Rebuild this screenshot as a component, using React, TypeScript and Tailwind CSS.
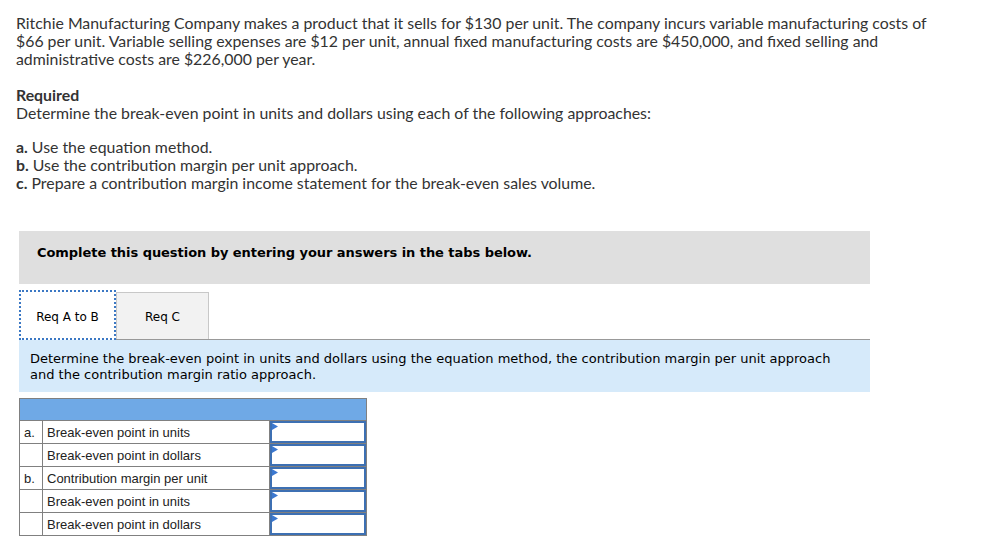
import React from "react";

const rows = [
  { k: "a.", label: "Break-even point in units" },
  { k: "", label: "Break-even point in dollars" },
  { k: "b.", label: "Contribution margin per unit" },
  { k: "", label: "Break-even point in units" },
  { k: "", label: "Break-even point in dollars" },
];

export default function App() {
  return (
    <div className="w-[994px] h-[545px] bg-white overflow-hidden">
      <div className="pl-4 pt-[14px] text-[15.85px] leading-[18px] text-[#333]" style={{ fontFamily: "Lato, 'Open Sans', sans-serif" }}>
        <p className="w-[940px]">
          Ritchie Manufacturing Company makes a product that it sells for $130 per unit. The company incurs variable manufacturing costs of $66 per unit. Variable selling expenses are $12 per unit, annual fixed manufacturing costs are $450,000, and fixed selling and administrative costs are $226,000 per year.
        </p>
        <p className="mt-[18px] font-bold">Required</p>
        <p>Determine the break-even point in units and dollars using each of the following approaches:</p>
        <div className="mt-[16px]">
          <p><b>a.</b> Use the equation method.</p>
          <p><b>b.</b> Use the contribution margin per unit approach.</p>
          <p><b>c.</b> Prepare a contribution margin income statement for the break-even sales volume.</p>
        </div>
      </div>

      <div className="ml-[19px] mt-[39px] w-[851px]" style={{ fontFamily: "'DejaVu Sans', Verdana, sans-serif" }}>
        <div className="h-[53px] bg-[#dfdfdf] pl-[18px] pt-[14px] text-[13px] leading-[16px] font-bold text-black tracking-[-0.05px]">
          Complete this question by entering your answers in the tabs below.
        </div>
        <div className="mt-[6px] flex items-end h-[49px]">
          <div className="w-[97px] h-[50px] bg-white border-2 border-dotted border-[#3b78c4] flex items-center justify-center pt-[3px] text-[12px] text-black relative z-10 mb-[-1px]">
            Req A to B
          </div>
          <div className="w-[93px] h-[47px] bg-[#f2f2f2] border border-[#c8c8c8] border-b-0 flex items-center justify-center pt-[1px] text-[12px] text-black">
            Req C
          </div>
        </div>
        <div className="border-t border-[#999] bg-[#d6eafa] h-[53px] pl-[11px] pt-[11px] text-[13px] leading-[16px] text-black">
          Determine the break-even point in units and dollars using the equation method, the contribution margin per unit approach
          <br />
          and the contribution margin ratio approach.
        </div>
      </div>

      <table className="ml-[19px] mt-[6px] border-collapse text-[13px] text-[#222]" style={{ fontFamily: "'Liberation Sans', Arial, sans-serif" }}>
        <tbody>
          <tr>
            <td colSpan={3} className="h-[22px] bg-[#6fa9e6] border border-[#808080] p-0"></td>
          </tr>
          {rows.map((r, i) => (
            <tr key={i}>
              <td className="w-[23px] h-[22px] border border-[#808080] pl-[4px] p-0 align-middle leading-[15px]">{r.k}</td>
              <td className="w-[227px] h-[22px] border border-[#808080] pl-[4px] p-0 align-middle leading-[15px]">{r.label}</td>
              <td className="w-[97px] h-[22px] border border-[#808080] p-0">
                <div className="relative h-[22px] border-2 border-[#3d70b3] bg-white">
                  <svg className="absolute left-0 top-0" width="6" height="7" viewBox="0 0 6 7">
                    <polygon points="0,0 6,3.5 0,7" fill="#3b78d0" />
                  </svg>
                </div>
              </td>
            </tr>
          ))}
        </tbody>
      </table>
    </div>
  );
}
